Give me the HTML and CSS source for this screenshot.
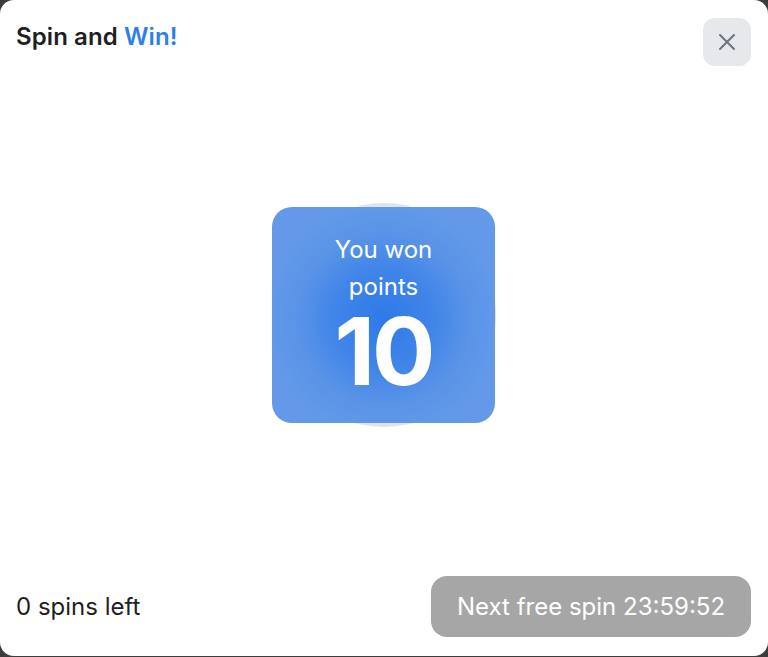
FILE: index.html
```html
<!DOCTYPE html>
<html lang="en">
<head>
<meta charset="utf-8">
<title>Spin and Win</title>
<link rel="stylesheet" href="styles.css">
</head>
<body>
<div class="modal">
  <header class="modal-header">
    <h1 class="title">Spin and <span class="accent">Win!</span></h1>
    <button class="close-btn" aria-label="Close">
      <svg width="20" height="20" viewBox="0 0 20 20" fill="none" stroke="#6b7280" stroke-width="2" stroke-linecap="round">
        <path d="M3 3 L17 17 M17 3 L3 17"/>
      </svg>
    </button>
  </header>
  <main class="stage">
    <div class="wheel-stack">
      <div class="wheel"></div>
      <div class="prize-card">
        <div class="prize-label">You won<br>points</div>
        <div class="prize-value">10</div>
      </div>
    </div>
  </main>
  <footer class="modal-footer">
    <span class="spins-left">0 spins left</span>
    <button class="next-spin" disabled>Next free spin 23:59:52</button>
  </footer>
</div>
</body>
</html>
```

FILE: styles.css
```css
* { box-sizing: border-box; }
html, body { margin: 0; padding: 0; }
body {
  background: #3c3c3c;
  font-family: "Inter", "Noto Sans", sans-serif;
  width: 768px;
  height: 657px;
  overflow: hidden;
}
.modal {
  width: 768px;
  height: 656px;
  background: #ffffff;
  border-radius: 14px;
  display: flex;
  flex-direction: column;
  padding: 18px 17px 19px 16px;
}
.modal-header {
  display: flex;
  justify-content: space-between;
  align-items: flex-start;
}
.title {
  margin: 5px 0 0 0;
  font-size: 24px;
  font-weight: 600;
  color: #1f1f1f;
  line-height: 28px;
  letter-spacing: 0.1px;
}
.accent { color: #2f7fe9; }
.close-btn {
  width: 48px;
  height: 48px;
  border: none;
  border-radius: 12px;
  background: #e6e8eb;
  display: flex;
  align-items: center;
  justify-content: center;
  padding: 0;
}
.stage {
  flex: 1;
  display: flex;
  align-items: center;
  justify-content: center;
  padding-bottom: 12px;
}
.wheel-stack {
  display: grid;
  place-items: center;
}
.wheel-stack > * { grid-area: 1 / 1; }
.wheel {
  width: 224px;
  height: 224px;
  border-radius: 50%;
  background: #e2e3e5;
}
.prize-card {
  width: 223px;
  height: 216px;
  border-radius: 20px;
  background: radial-gradient(circle at 50% 52%, #2f7ae8 0%, #3f84e8 30%, #5a94e8 55%, #6399e8 75%);
  color: #ffffff;
  display: flex;
  flex-direction: column;
  align-items: center;
  padding-top: 24px;
  text-align: center;
}
.prize-label {
  font-size: 24px;
  line-height: 37px;
}
.prize-value {
  font-size: 94px;
  font-weight: 700;
  line-height: 80px;
  letter-spacing: -3px;
  margin-top: 6px;
}
.modal-footer {
  display: flex;
  justify-content: space-between;
  align-items: center;
}
.spins-left {
  font-size: 24px;
  color: #1f1f1f;
}
.next-spin {
  width: 320px;
  height: 61px;
  border: none;
  border-radius: 16px;
  background: #a6a6a6;
  color: #ffffff;
  font-family: "Inter", "Noto Sans", sans-serif;
  font-size: 24px;
  padding: 0;
}
```
